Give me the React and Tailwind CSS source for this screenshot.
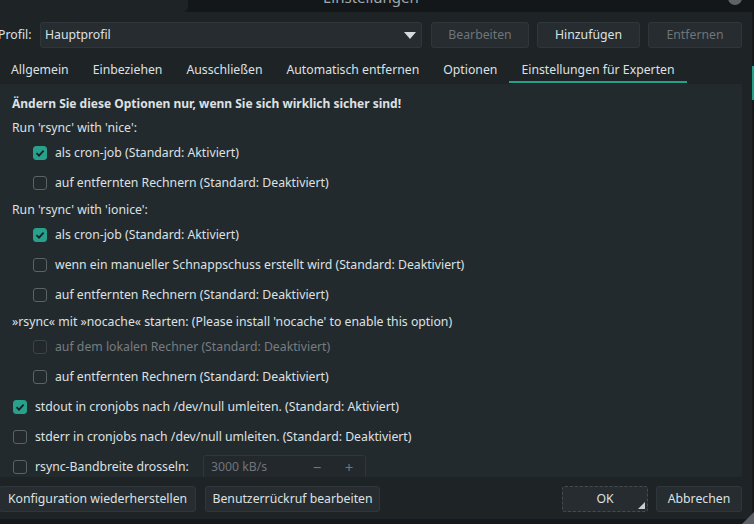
import React from "react";
import clsx from "clsx";

const Check = ({ checked, disabled }) => (
  <span
    className={clsx(
      "flex h-[14px] w-[14px] shrink-0 items-center justify-center rounded-[3px] border",
      checked
        ? "border-[#27a08c] bg-[#27a08c]"
        : disabled
        ? "border-[#3d4448] bg-[#22282c]"
        : "border-[#5b6266] bg-[#23292d]"
    )}
  >
    {checked && (
      <svg width="10" height="10" viewBox="0 0 10 10">
        <path d="M1.5 5.2 L4 7.6 L8.6 2.6" fill="none" stroke="#172024" strokeWidth="1.8" />
      </svg>
    )}
  </span>
);

const Option = ({ label, checked, disabled, indent }) => (
  <div className={clsx("flex h-[30px] shrink-0 items-center gap-2", indent ? "ml-[21px]" : "ml-px")}>
    <Check checked={checked} disabled={disabled} />
    <span className={disabled ? "text-[#767c80]" : "text-[#dde1e3]"}>{label}</span>
  </div>
);

const Heading = ({ children }) => (
  <div className="flex h-[22px] shrink-0 items-center pt-[2px]">{children}</div>
);

const Button = ({ children, disabled, className }) => (
  <div
    className={clsx(
      "flex h-[26px] items-center justify-center rounded-[3px] border border-[#30373b] bg-[#262c30]",
      disabled ? "text-[#6f7579]" : "text-[#dde1e3]",
      className
    )}
  >
    {children}
  </div>
);

const tabs = [
  "Allgemein",
  "Einbeziehen",
  "Ausschließen",
  "Automatisch entfernen",
  "Optionen",
  "Einstellungen für Experten",
];

export default function App() {
  return (
    <div
      className="flex h-[524px] w-[754px] flex-col overflow-hidden bg-[#15191c] text-[12.25px] text-[#dde1e3]"
      style={{ fontFamily: '"Noto Sans", "DejaVu Sans", sans-serif' }}
    >
      {/* title bar */}
      <div className="flex h-[12px] shrink-0 overflow-hidden">
        <div className="w-[188px] rounded-br-[6px] bg-[#1e2326]" />
        <div className="flex flex-1 bg-[#141719]">
          <span className="ml-[135px] mt-[-10px] text-[15px] leading-none text-[#a3a8ab]">Einstellungen</span>
          <span className="ml-auto mr-[12px] mt-[-9px] h-[14px] w-[14px] rounded-full bg-[#5f6468]" />
        </div>
      </div>

      <div className="flex flex-1">
        {/* dialog body */}
        <div className="flex w-[752px] flex-col bg-[#1e2326] pr-[10px] pt-[10px]">
          {/* profile row */}
          <div className="flex h-[26px] shrink-0 items-center">
            <span className="ml-[-2px] w-[42px]">Profil:</span>
            <div className="flex h-[26px] w-[382px] items-center justify-between rounded-[3px] border border-[#30373b] bg-[#262c30] pl-[4px] pr-[5px]">
              <span>Hauptprofil</span>
              <svg width="12" height="7" viewBox="0 0 12 7">
                <path d="M0 0 H12 L6 7 Z" fill="#d6dadc" />
              </svg>
            </div>
            <Button disabled className="ml-[9px] w-[98px]">Bearbeiten</Button>
            <Button className="ml-[8px] w-[103px]">Hinzufügen</Button>
            <Button disabled className="ml-[8px] w-[94px]">Entfernen</Button>
          </div>

          {/* tabs */}
          <div className="ml-[-1px] mt-2 flex h-[28px] shrink-0">
            {tabs.map((t, i) => (
              <div
                key={t}
                className={clsx(
                  "flex h-[27px] items-center border-b-2 px-[12px] pt-[3px]",
                  i === tabs.length - 1 ? "border-[#22a18c]" : "border-transparent"
                )}
              >
                {t}
              </div>
            ))}
          </div>

          {/* panel */}
          <div className="flex h-[393px] shrink-0 flex-col overflow-hidden bg-[#232a2e] pl-3 pt-2">
            <div className="flex h-[24px] shrink-0 items-center text-[12px] font-bold">
              Ändern Sie diese Optionen nur, wenn Sie sich wirklich sicher sind!
            </div>
            <Heading>Run 'rsync' with 'nice':</Heading>
            <Option indent checked label="als cron-job (Standard: Aktiviert)" />
            <Option indent label="auf entfernten Rechnern (Standard: Deaktiviert)" />
            <Heading>Run 'rsync' with 'ionice':</Heading>
            <Option indent checked label="als cron-job (Standard: Aktiviert)" />
            <Option indent label="wenn ein manueller Schnappschuss erstellt wird (Standard: Deaktiviert)" />
            <Option indent label="auf entfernten Rechnern (Standard: Deaktiviert)" />
            <Heading>»rsync« mit »nocache« starten: (Please install 'nocache' to enable this option)</Heading>
            <Option indent disabled label="auf dem lokalen Rechner (Standard: Deaktiviert)" />
            <Option indent label="auf entfernten Rechnern (Standard: Deaktiviert)" />
            <Option checked label="stdout in cronjobs nach /dev/null umleiten. (Standard: Aktiviert)" />
            <Option label="stderr in cronjobs nach /dev/null umleiten. (Standard: Deaktiviert)" />
            <div className="ml-px flex h-[30px] shrink-0 items-center gap-2">
              <Check />
              <span className="w-[160px] whitespace-nowrap">rsync-Bandbreite drosseln:</span>
              <div className="flex h-[24px] w-[163px] items-center rounded-[3px] border border-[#30373b] bg-[#22282c] pl-[7px] text-[#6f7579]">
                <span className="flex-1">3000 kB/s</span>
                <span className="w-[32px] text-center text-[15px]">−</span>
                <span className="w-[32px] text-center text-[15px]">+</span>
              </div>
            </div>
          </div>

          {/* bottom buttons */}
          <div className="mt-[9px] flex h-[26px] shrink-0 items-center">
            <Button className="ml-[-1px] w-[197px]">Konfiguration wiederherstellen</Button>
            <Button className="ml-[9px] w-[175px]">Benutzerrückruf bearbeiten</Button>
            <div className="relative ml-auto flex h-[26px] w-[86px] items-center justify-center rounded-[3px] border border-dashed border-[#454c51] bg-[#262c30]">
              OK
              <svg className="absolute bottom-[2px] right-[2px]" width="7" height="7" viewBox="0 0 7 7">
                <path d="M7 0 V7 H0 Z" fill="#c9cdd0" />
              </svg>
            </div>
            <Button className="ml-[8px] w-[86px]">Abbrechen</Button>
          </div>
          <div className="flex-1" />
        </div>

        {/* window behind, right edge */}
        <div className="flex flex-1 flex-col">
          <div className="mt-[54px] h-[34px] bg-[#22a18c]" />
        </div>
      </div>

      {/* bottom strip */}
      <div className="flex h-[5px] shrink-0 justify-end">
        <svg width="12" height="12" viewBox="0 0 12 12" className="mt-[-7px]">
          <path d="M12 0 V12 H0 Z" fill="#5b6166" />
        </svg>
      </div>
    </div>
  );
}
